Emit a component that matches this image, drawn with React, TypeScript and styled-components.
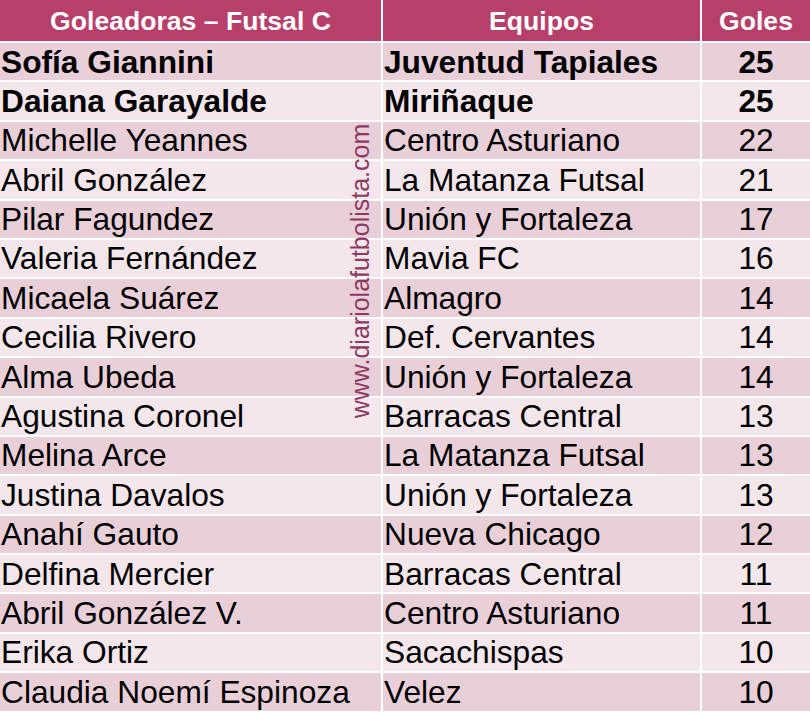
import styled, { createGlobalStyle } from 'styled-components';

const GlobalStyle = createGlobalStyle`
    html, body {
        margin: 0;
        padding: 0;
        background: #ffffff;
    }
    body {
        font-family: "Liberation Sans", Arial, sans-serif;
    }
`;

const Page = styled.div`
    position: relative;
    width: 810px;
    height: 714px;
    overflow: hidden;
    background: #ffffff;
`;

const Table = styled.div`
    display: grid;
    grid-template-columns: 381px 317px 1fr;
    grid-template-rows: 41px;
    grid-auto-rows: 37.4px;
    column-gap: 2px;
    row-gap: 2px;
    background: #ffffff;
`;

const HeadCell = styled.div`
    display: flex;
    align-items: center;
    justify-content: center;
    background: #b93f6b;
    color: #ffffff;
    font-weight: 700;
    font-size: 26.6px;
    padding-top: 1px;
`;

const Cell = styled.div<{ $dark: boolean; $bold: boolean; $center?: boolean }>`
    display: flex;
    align-items: center;
    justify-content: ${p => (p.$center ? 'center' : 'flex-start')};
    padding-left: ${p => (p.$center ? '0' : '1px')};
    padding-top: 1px;
    background: ${p => (p.$dark ? '#e9cfd8' : '#f4e7eb')};
    color: #000000;
    font-size: 31.7px;
    line-height: 37.4px;
    font-weight: ${p => (p.$bold ? 700 : 400)};
    white-space: nowrap;
`;

const Watermark = styled.div`
    position: absolute;
    left: 360px;
    top: 271px;
    transform: translate(-50%, -50%) rotate(-90deg);
    color: #8c3a64;
    font-size: 25px;
    white-space: nowrap;
    line-height: 1;
`;

type Scorer = {
    name: string;
    team: string;
    goals: number;
};

const scorers: Scorer[] = [
    { name: 'Sofía Giannini', team: 'Juventud Tapiales', goals: 25 },
    { name: 'Daiana Garayalde', team: 'Miriñaque', goals: 25 },
    { name: 'Michelle Yeannes', team: 'Centro Asturiano', goals: 22 },
    { name: 'Abril González', team: 'La Matanza Futsal', goals: 21 },
    { name: 'Pilar Fagundez', team: 'Unión y Fortaleza', goals: 17 },
    { name: 'Valeria Fernández', team: 'Mavia FC', goals: 16 },
    { name: 'Micaela Suárez', team: 'Almagro', goals: 14 },
    { name: 'Cecilia Rivero', team: 'Def. Cervantes', goals: 14 },
    { name: 'Alma Ubeda', team: 'Unión y Fortaleza', goals: 14 },
    { name: 'Agustina Coronel', team: 'Barracas Central', goals: 13 },
    { name: 'Melina Arce', team: 'La Matanza Futsal', goals: 13 },
    { name: 'Justina Davalos', team: 'Unión y Fortaleza', goals: 13 },
    { name: 'Anahí Gauto', team: 'Nueva Chicago', goals: 12 },
    { name: 'Delfina Mercier', team: 'Barracas Central', goals: 11 },
    { name: 'Abril González V.', team: 'Centro Asturiano', goals: 11 },
    { name: 'Erika Ortiz', team: 'Sacachispas', goals: 10 },
    { name: 'Claudia Noemí Espinoza', team: 'Velez', goals: 10 },
];

const App = () => {
    return (
        <Page>
            <GlobalStyle />
            <Table>
                <HeadCell>Goleadoras – Futsal C</HeadCell>
                <HeadCell>Equipos</HeadCell>
                <HeadCell>Goles</HeadCell>
                {scorers.map((s, i) => {
                    const dark = i % 2 === 0;
                    const bold = s.goals === 25;
                    return [
                        <Cell key={`n${i}`} $dark={dark} $bold={bold}>{s.name}</Cell>,
                        <Cell key={`t${i}`} $dark={dark} $bold={bold}>{s.team}</Cell>,
                        <Cell key={`g${i}`} $dark={dark} $bold={bold} $center>{s.goals}</Cell>,
                    ];
                })}
            </Table>
            <Watermark>www.diariolafutbolista.com</Watermark>
        </Page>
    );
};

export default App;
